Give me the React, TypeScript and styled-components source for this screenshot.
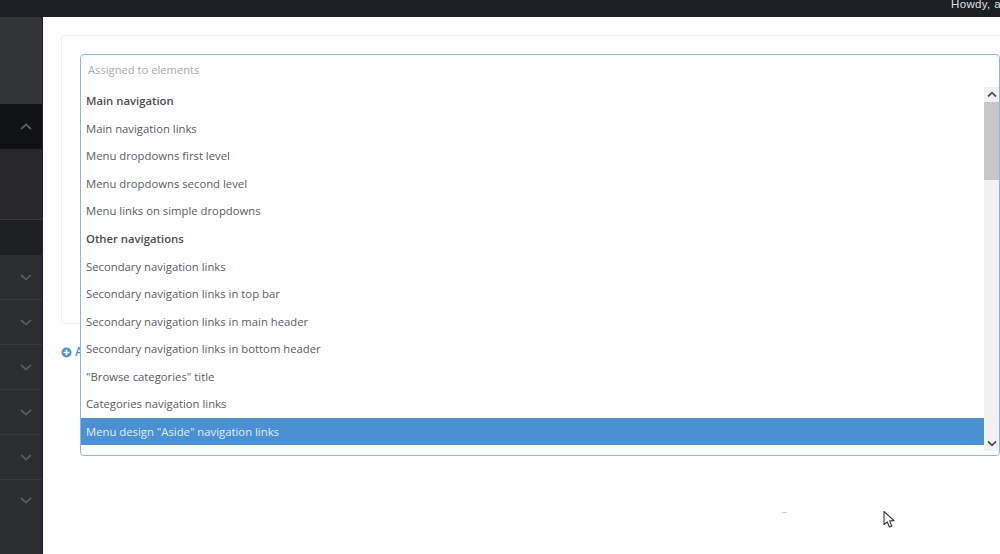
import React from "react";
import styled, { createGlobalStyle } from "styled-components";

const Global = createGlobalStyle`
  html, body { margin: 0; padding: 0; background: #fff; overflow: hidden; }
  body { font-family: "Open Sans", "Liberation Sans", sans-serif; }
`;
const Page = styled.div`
  width: 1000px; height: 554px; display: flex; flex-direction: column; position: relative; overflow: hidden; background: #fff;
`;
const TopBar = styled.header`
  height: 17px; flex: none; background: #1b1f24; color: #dfe1e3; display: flex; justify-content: flex-end; overflow: hidden;
  font: 11.5px/1 "Liberation Sans", Arial, sans-serif;
`;
const Howdy = styled.span`
  width: 49px; white-space: nowrap; overflow: hidden; margin-top: -1px; letter-spacing: .35px; line-height: 11px;
`;
const Body = styled.div`flex: 1; display: flex; min-height: 0;`;
const Sidebar = styled.nav`
  width: 42.5px; box-sizing: border-box; flex: none; background: #2c2d2f; border-right: 1px solid #1e1f22; display: flex; flex-direction: column;
`;
const SideRow = styled.div<{ $h: number; $tone?: string; $line?: boolean }>`
  height: ${p => p.$h}px; flex: none; background: ${p => p.$tone || "transparent"};
  display: flex; align-items: center; justify-content: flex-end; padding-right: 9.5px; box-sizing: border-box;
  border-bottom: ${p => (p.$line ? "1px solid #38393b" : "none")};
  color: #58595b;
`;
const Main = styled.main`flex: 1; padding: 18px 0 0 18.5px; min-width: 0;`;
const Card = styled.section`
  height: 289px; box-sizing: border-box; border: 1px solid #efeff1; border-right: 0; border-radius: 4px 0 0 4px; background: #fefefe;
`;
const AddLink = styled.div`
  margin-top: 21px; color: #4a90d2; display: flex; align-items: center; gap: 3px; font-size: 12px; font-weight: 600; line-height: 14px;
`;
const Dropdown = styled.div`
  position: absolute; left: 80px; top: 54px; width: 920px; height: 402px; box-sizing: border-box;
  border: 1px solid #8fb5da; border-radius: 4px; background: #fff; display: flex; flex-direction: column; overflow: hidden;
`;
const Search = styled.div`
  height: 32px; flex: none; box-sizing: border-box; padding: 6.5px 0 0 7px; color: #a8aaac; font-size: 11.2px; line-height: 15px;
`;
const ListWrap = styled.div`height: 364px; flex: none; display: flex;`;
const Options = styled.ul`flex: 1; list-style: none; margin: 0; padding: 0; min-width: 0;`;
const Option = styled.li<{ $group?: boolean; $active?: boolean }>`
  height: 27.55px; box-sizing: border-box; padding-left: 5px; display: flex; align-items: center; font-size: 11.3px; white-space: nowrap;
  font-weight: ${p => (p.$group ? 600 : 400)};
  color: ${p => (p.$active ? "#e3eef9" : p.$group ? "#4a4d50" : "#585b5e")};
  background: ${p => (p.$active ? "#4a90d2" : "transparent")};
`;
const Scrollbar = styled.div`
  width: 15px; flex: none; background: #f1f1f1; display: flex; flex-direction: column; align-items: center;
`;
const ArrowBox = styled.div`height: 15px; flex: none; display: flex; align-items: center; justify-content: center;`;
const Thumb = styled.div`width: 100%; height: 78px; flex: none; background: #c6c6c6;`;
const Spacer = styled.div`flex: 1;`;
const Cursor = styled.svg`position: absolute; left: 882px; top: 510px;`;
const Speck = styled.div`position: absolute; left: 782px; top: 512px; width: 5px; height: 1px; background: #cfd2d5;`;

const Chevron = ({ up }: { up?: boolean }) => (
  <svg width="12" height="7" viewBox="0 0 12 7" fill="none">
    <path d={up ? "M1 6 L6 1.5 L11 6" : "M1 1 L6 5.5 L11 1"} stroke="currentColor" strokeWidth="1.7" />
  </svg>
);
const SmallArrow = ({ up }: { up?: boolean }) => (
  <svg width="10" height="7" viewBox="0 0 10 7" fill="none">
    <path d={up ? "M1 5.5 L5 1.7 L9 5.5" : "M1 1.5 L5 5.3 L9 1.5"} stroke="#505050" strokeWidth="1.8" />
  </svg>
);
const PlusIcon = () => (
  <svg width="11" height="11" viewBox="0 0 11 11">
    <circle cx="5.5" cy="5.5" r="5" fill="#4a90d2" />
    <path d="M5.5 2.6v5.8M2.6 5.5h5.8" stroke="#fff" strokeWidth="1.6" />
  </svg>
);

const options: { label: string; group?: boolean; active?: boolean }[] = [
  { label: "Main navigation", group: true },
  { label: "Main navigation links" },
  { label: "Menu dropdowns first level" },
  { label: "Menu dropdowns second level" },
  { label: "Menu links on simple dropdowns" },
  { label: "Other navigations", group: true },
  { label: "Secondary navigation links" },
  { label: "Secondary navigation links in top bar" },
  { label: "Secondary navigation links in main header" },
  { label: "Secondary navigation links in bottom header" },
  { label: "\"Browse categories\" title" },
  { label: "Categories navigation links" },
  { label: "Menu design \"Aside\" navigation links", active: true },
];

export default function App() {
  return (
    <Page>
      <Global />
      <TopBar><Howdy>Howdy, admin</Howdy></TopBar>
      <Body>
        <Sidebar>
          <SideRow $h={41} $tone="#333436" $line />
          <SideRow $h={46} $tone="#343537" />
          <SideRow $h={45} $tone="#111214"><Chevron up /></SideRow>
          <SideRow $h={71} $tone="#29292b" $line />
          <SideRow $h={35} $tone="#1f2023" />
          <SideRow $h={45} $line><Chevron /></SideRow>
          <SideRow $h={45} $line><Chevron /></SideRow>
          <SideRow $h={45} $line><Chevron /></SideRow>
          <SideRow $h={45} $line><Chevron /></SideRow>
          <SideRow $h={45} $line><Chevron /></SideRow>
          <SideRow $h={41}><Chevron /></SideRow>
        </Sidebar>
        <Main>
          <Card />
          <AddLink><PlusIcon />Add</AddLink>
        </Main>
      </Body>
      <Dropdown>
        <Search>Assigned to elements</Search>
        <ListWrap>
          <Options>
            {options.map(o => (
              <Option key={o.label} $group={o.group} $active={o.active}>{o.label}</Option>
            ))}
          </Options>
          <Scrollbar>
            <ArrowBox><SmallArrow up /></ArrowBox>
            <Thumb />
            <Spacer />
            <ArrowBox><SmallArrow /></ArrowBox>
          </Scrollbar>
        </ListWrap>
      </Dropdown>
      <Speck />
      <Cursor width="14" height="20" viewBox="0 0 14 20">
        <path d="M2 1.5 L2 14.5 L5.2 11.8 L7.4 17 L9.8 16 L7.6 10.9 L12 10.7 Z" fill="#fff" stroke="#333" strokeWidth="1.1" strokeLinejoin="round" />
      </Cursor>
    </Page>
  );
}
